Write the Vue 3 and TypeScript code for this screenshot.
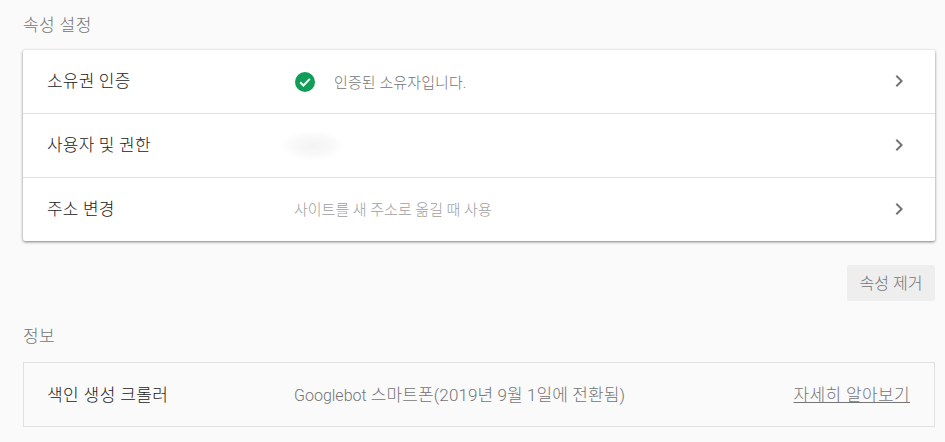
<script setup lang="ts">
interface SettingRow {
  label: string
  kind: 'verified' | 'blurred' | 'hint'
  text?: string
}

const rows: SettingRow[] = [
  { label: '소유권 인증', kind: 'verified', text: '인증된 소유자입니다.' },
  { label: '사용자 및 권한', kind: 'blurred' },
  { label: '주소 변경', kind: 'hint', text: '사이트를 새 주소로 옮길 때 사용' },
]
</script>

<template>
  <main class="page">
    <h2 class="section-title">속성 설정</h2>

    <section class="card">
      <div v-for="row in rows" :key="row.label" class="row">
        <div class="row__label">{{ row.label }}</div>
        <div class="row__value">
          <template v-if="row.kind === 'verified'">
            <svg class="check" viewBox="0 0 20 20" width="20" height="20" aria-hidden="true">
              <circle cx="10" cy="10" r="10" fill="#0f9d58" />
              <path d="M5.2 10.3l3.2 3.2 6.4-6.6" fill="none" stroke="#fff" stroke-width="2" />
            </svg>
            <span class="row__status">{{ row.text }}</span>
          </template>
          <div v-else-if="row.kind === 'blurred'" class="smudge"></div>
          <span v-else class="row__hint">{{ row.text }}</span>
        </div>
        <svg class="chevron" viewBox="0 0 24 24" width="24" height="24" aria-hidden="true">
          <path d="M8.6 7.4L10 6l6 6-6 6-1.4-1.4 4.6-4.6z" fill="#757575" />
        </svg>
      </div>
    </section>

    <div class="actions">
      <button class="remove" type="button">속성 제거</button>
    </div>

    <h2 class="section-title section-title--info">정보</h2>

    <section class="info">
      <div class="info__label">색인 생성 크롤러</div>
      <div class="info__value"><span class="latin">Googlebot</span> 스마트폰(2019년 9월 1일에 전환됨)</div>
      <a class="info__link" href="#">자세히 알아보기</a>
    </section>
  </main>
</template>

<style>
html,
body {
  background: #fafafa;
}
</style>

<style scoped>
.page {
  box-sizing: border-box;
  width: 945px;
  height: 442px;
  overflow: hidden;
  padding: 16px 10px 0 23px;
  background: #fafafa;
  font-family: Roboto, "Noto Sans CJK KR", sans-serif;
}

.section-title {
  margin: 0;
  height: 18px;
  font-size: 17px;
  font-weight: 300;
  line-height: 18px;
  letter-spacing: 0.4px;
  color: #757575;
}

.section-title--info {
  margin-top: 26px;
}

.card {
  margin-top: 16px;
  border-radius: 2px;
  background: #fff;
  box-shadow: 0 1px 3px rgba(0, 0, 0, 0.5);
}

.row {
  display: grid;
  height: 63px;
  grid-template-columns: 247px minmax(0, 1fr) 24px;
  align-items: center;
  padding: 0 24px;
  border-bottom: 1px solid #e0e0e0;
}

.row:last-child {
  border-bottom: 0;
}

.row__label {
  padding-bottom: 5px;
  font-size: 17px;
  font-weight: 300;
  letter-spacing: 0.2px;
  color: #212121;
}

.row__value {
  display: flex;
  align-items: center;
  min-width: 0;
}

.check {
  margin: 0 19px 0 1px;
}

.row__status {
  font-size: 15px;
  font-weight: 300;
  letter-spacing: 0.1px;
  color: #757575;
}

.row__hint {
  padding-bottom: 2px;
  font-size: 15px;
  font-weight: 300;
  color: #9e9e9e;
}

.smudge {
  width: 65px;
  height: 31px;
  margin-left: -14px;
  background: radial-gradient(ellipse farthest-side, #f3f3f3, #f9f9f9 60%, #ffffff);
}

.chevron {
  margin-top: -1px;
}

.actions {
  display: flex;
  justify-content: flex-end;
  margin-top: 24px;
}

.remove {
  width: 88px;
  height: 36px;
  border: 0;
  border-radius: 2px;
  padding: 0 0 3px;
  background: #eeeeee;
  font-family: inherit;
  font-size: 16px;
  font-weight: 300;
  color: #757575;
}

.info {
  display: grid;
  box-sizing: border-box;
  height: 65px;
  margin-top: 17px;
  grid-template-columns: 247px minmax(0, 1fr) auto;
  align-items: center;
  padding: 0 24px 3px 23px;
  border: 1px solid #e0e0e0;
}

.info__label {
  font-size: 17px;
  font-weight: 300;
  letter-spacing: 0.4px;
  color: #212121;
}

.info__value {
  font-size: 17px;
  font-weight: 300;
  letter-spacing: 0.1px;
  color: #757575;
}

.latin {
  font-size: 16px;
  letter-spacing: 0;
}

.info__link {
  font-size: 17px;
  font-weight: 300;
  letter-spacing: 0.35px;
  color: #757575;
  text-decoration: underline;
}
</style>
